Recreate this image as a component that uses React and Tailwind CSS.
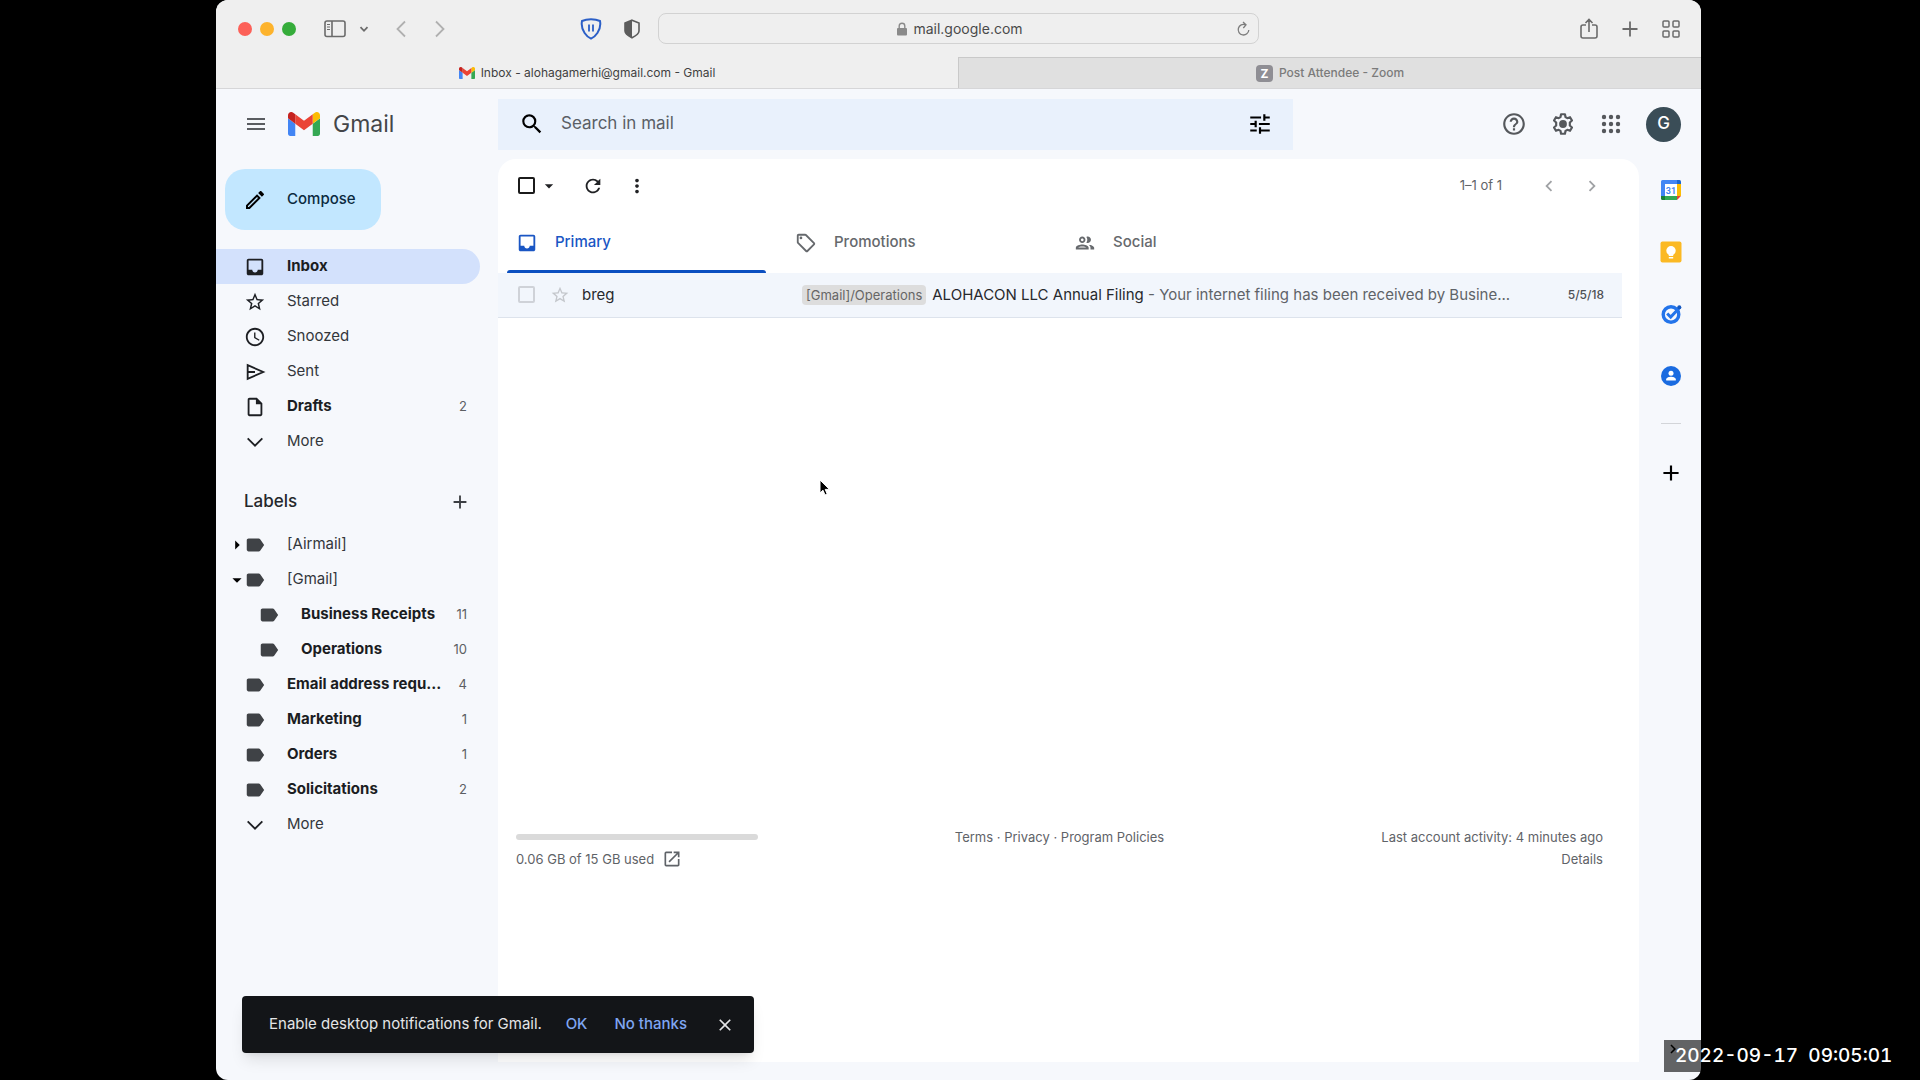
import React, { useState } from "react";
import {
  MdAdd,
  MdArrowDropDown,
  MdArrowRight,
  MdChevronLeft,
  MdChevronRight,
  MdClose,
  MdHelpOutline,
  MdInbox,
  MdLabel,
  MdMenu,
  MdMoreVert,
  MdOpenInNew,
  MdOutlineAccessTime,
  MdOutlineEdit,
  MdOutlineInsertDriveFile,
  MdOutlinePeople,
  MdOutlineSell,
  MdRefresh,
  MdSearch,
  MdStarOutline,
  MdTune,
} from "react-icons/md";

const SendIcon = ({ className }) => (
  <svg viewBox="0 0 24 24" className={className} fill="none" stroke="currentColor" strokeWidth="2" aria-hidden="true">
    <path d="M4 4.500L21 12 4 19.500zM4 12h8" />
  </svg>
);

const MoreIcon = ({ className }) => (
  <svg viewBox="0 0 24 24" className={className} fill="none" stroke="currentColor" strokeWidth="2" aria-hidden="true">
    <path d="M4 8l8 8 8-8" />
  </svg>
);

const folders = [
  { name: "Inbox", icon: MdInbox, active: true, bold: true },
  { name: "Starred", icon: MdStarOutline },
  { name: "Snoozed", icon: MdOutlineAccessTime },
  { name: "Sent", icon: SendIcon },
  { name: "Drafts", icon: MdOutlineInsertDriveFile, count: 2, bold: true },
  { name: "More", icon: MoreIcon },
];

const labels = [
  { name: "[Airmail]", icon: MdLabel, caret: "right" },
  { name: "[Gmail]", icon: MdLabel, caret: "down" },
  { name: "Business Receipts", icon: MdLabel, count: 11, bold: true, nested: true },
  { name: "Operations", icon: MdLabel, count: 10, bold: true, nested: true },
  { name: "Email address requ...", icon: MdLabel, count: 4, bold: true },
  { name: "Marketing", icon: MdLabel, count: 1, bold: true },
  { name: "Orders", icon: MdLabel, count: 1, bold: true },
  { name: "Solicitations", icon: MdLabel, count: 2, bold: true },
  { name: "More", icon: MoreIcon },
];

const tabs = [
  { name: "Primary", icon: MdInbox },
  { name: "Promotions", icon: MdOutlineSell },
  { name: "Social", icon: MdOutlinePeople },
];

const GmailLogo = ({ className }) => (
  <svg viewBox="52 42 88 66" className={className} aria-hidden="true">
    <path fill="#4285f4" d="M58 108h14V74L52 59v43c0 3.32 2.69 6 6 6" />
    <path fill="#34a853" d="M120 108h14c3.32 0 6-2.69 6-6V59l-20 15" />
    <path fill="#fbbc04" d="M120 48v26l20-15v-8c0-7.42-8.47-11.65-14.4-7.2" />
    <path fill="#ea4335" d="M72 74V48l24 18 24-18v26L96 92" />
    <path fill="#c5221f" d="M52 51v8l20 15V48l-5.6-4.2c-5.94-4.45-14.4-.22-14.4 7.2" />
  </svg>
);

const GearIcon = () => (
  <svg viewBox="0 0 24 24" className="w-[26px] h-[26px]" aria-hidden="true">
    <path
      fill="none"
      stroke="currentColor"
      strokeWidth="2"
      strokeLinejoin="round"
      d="M10.2 3h3.6l.5 2.6 1.7 1 2.5-.9 1.8 3.1-2 1.8v2.8l2 1.8-1.8 3.1-2.5-.9-1.7 1-.5 2.6h-3.6l-.5-2.6-1.7-1-2.5.9-1.8-3.1 2-1.8v-2.8l-2-1.8 1.8-3.1 2.5.9 1.7-1z"
    />
    <circle cx="12" cy="12" r="3.6" fill="currentColor" />
  </svg>
);

const AppsIcon = () => (
  <svg viewBox="0 0 24 24" className="w-6 h-6" fill="currentColor" aria-hidden="true">
    {[5, 12, 19].map((y) => [5, 12, 19].map((x) => <circle key={`${x}-${y}`} cx={x} cy={y} r="2.2" />))}
  </svg>
);

const CalendarIcon = () => (
  <svg viewBox="0 0 20 20" className="w-5 h-5" aria-hidden="true">
    <path fill="#4285f4" d="M1.5 0H16v4H4v12H0V1.5A1.5 1.5 0 0 1 1.500 0z" />
    <path fill="#1967d2" d="M16 0h2.500A1.500 1.500 0 0 1 20 1.500V4h-4z" />
    <path fill="#fbbc04" d="M16 4h4v12h-4z" />
    <path fill="#34a853" d="M4 16h12v4H4z" />
    <path fill="#188038" d="M0 16h4v4H1.500A1.500 1.500 0 0 1 0 18.500z" />
    <path fill="#ea4335" d="M16 16h4l-4 4z" />
    <path fill="#fff" d="M4 4h12v12H4z" />
    <text x="10" y="13.500" textAnchor="middle" fontSize="9" fontWeight="600" fontFamily="Roboto, sans-serif" fill="#4285f4">
      31
    </text>
  </svg>
);

const KeepIcon = () => (
  <svg viewBox="0 0 22 22" className="w-[22px] h-[22px]" aria-hidden="true">
    <rect x="0.500" y="0.500" width="21" height="21" rx="2" fill="#fbb924" />
    <circle cx="11" cy="9.800" r="4.700" fill="#fff" />
    <path fill="#fff" d="M8.800 12h4.400v3H8.800zM8.800 16h4.400v1.500H8.800z" />
  </svg>
);

const TasksIcon = () => (
  <svg viewBox="0 0 22 22" className="w-[22px] h-[22px]" aria-hidden="true">
    <circle cx="11" cy="11.500" r="7.800" fill="none" stroke="#2374ea" strokeWidth="3.400" />
    <path fill="none" stroke="#2374ea" strokeWidth="3" d="M7.200 10.500l3.500 3.500 9.500-10" />
    <circle cx="19.300" cy="4.300" r="2" fill="#1558c0" />
  </svg>
);

const ContactsIcon = () => (
  <svg viewBox="0 0 20 20" className="w-5 h-5" aria-hidden="true">
    <circle cx="10" cy="10" r="10" fill="#1a6be0" />
    <circle cx="10" cy="7.300" r="2.500" fill="#fff" />
    <path fill="#fff" d="M5.200 14.500v-1.200c0-1.700 2.800-2.600 4.800-2.600s4.800.9 4.800 2.600v1.200z" />
  </svg>
);

const BrowserBar = () => (
  <div className="bg-[#efefef]">
    <div className="h-[57px] flex items-center text-[#6b6b6b]">
      <div className="flex-1 flex items-center">
        <div className="flex items-center gap-2 ml-[22px]">
          <span className="w-[14px] h-[14px] rounded-full bg-[#fc6058]" />
          <span className="w-[14px] h-[14px] rounded-full bg-[#fdb32c]" />
          <span className="w-[14px] h-[14px] rounded-full bg-[#35ac3a]" />
        </div>
        <button aria-label="Sidebar" className="ml-7">
          <svg viewBox="0 0 22 18" className="w-[22px] h-[18px]" fill="none" stroke="currentColor" strokeWidth="1.600">
            <rect x="1" y="1" width="20" height="15.500" rx="2" />
            <path d="M8 1v15.500" />
            <path strokeWidth="1" d="M3 4.500h3M3 7h3M3 9.500h3" />
          </svg>
        </button>
        <button aria-label="Tab groups" className="ml-[13px]">
          <svg viewBox="0 0 10 10" className="w-[10px] h-[10px]" fill="none" stroke="currentColor" strokeWidth="1.800">
            <path d="M1.500 3.200L5 6.800l3.500-3.600" />
          </svg>
        </button>
        <button aria-label="Back" className="ml-[27px] text-[#b0b0b0]">
          <svg viewBox="0 0 10 18" className="w-[10px] h-[18px]" fill="none" stroke="currentColor" strokeWidth="1.800">
            <path d="M9 1.500L1.500 9 9 16.500" />
          </svg>
        </button>
        <button aria-label="Forward" className="ml-[29px] text-[#b0b0b0]">
          <svg viewBox="0 0 10 18" className="w-[10px] h-[18px]" fill="none" stroke="currentColor" strokeWidth="1.800">
            <path d="M1 1.500L8.500 9 1 16.500" />
          </svg>
        </button>
        <div className="ml-auto mr-[18px] flex items-center gap-[22px]">
          <button aria-label="Password manager">
            <svg viewBox="0 0 22 22" className="w-[22px] h-[22px]" fill="none" stroke="#2b5fc7">
              <path strokeWidth="2" d="M11 1.300c-3.200 0-6.600.6-9 1.700-.8 4 .2 8.500 2.600 12 1.700 2.500 4 4.700 6.400 5.700 2.400-1 4.700-3.200 6.400-5.700 2.400-3.500 3.400-8 2.600-12-2.400-1.100-5.800-1.700-9-1.700z" />
              <path strokeWidth="1.800" d="M9 6.500v7M13 6.500v7" />
            </svg>
          </button>
          <button aria-label="Privacy report">
            <svg viewBox="0 0 16 20" className="w-4 h-5">
              <path fill="none" stroke="#5c5c5c" strokeWidth="1.600" d="M8 1.200L15 4v8c0 3-3.500 5-7 6.800C4.500 17 1 15 1 12V4z" />
              <path fill="#5c5c5c" d="M8 1.200v17.600C4.500 17 1 15 1 12V4z" />
            </svg>
          </button>
        </div>
      </div>
      <div className="w-[601px] h-[31px] border border-[#d2d2d2] rounded-lg flex items-center px-2">
        <div className="flex-1 flex items-center justify-center gap-[6px] pl-4">
          <svg viewBox="0 0 10 14" className="w-[10px] h-[14px]">
            <rect y="6" width="10" height="7.500" rx="1" fill="#8a8a8a" />
            <path d="M2.200 6.500V4a2.800 2.800 0 0 1 5.600 0v2.500" fill="none" stroke="#8a8a8a" strokeWidth="1.400" />
          </svg>
          <span className="text-sm text-[#4a4a4a]">mail.google.com</span>
        </div>
        <button aria-label="Reload">
          <svg viewBox="0 0 13 16" className="w-[13px] h-4" fill="none" stroke="#7c7c7c" strokeWidth="1.300">
            <path d="M8.500 3.800A5.300 5.300 0 1 0 11.800 9M6 1l3 2.800L6.300 7" />
          </svg>
        </button>
      </div>
      <div className="flex-1 flex items-center justify-end">
        <div className="flex items-center gap-[23px] mr-[21px]">
          <button aria-label="Share">
            <svg viewBox="0 0 18 22" className="w-[18px] h-[22px]" fill="none" stroke="currentColor" strokeWidth="1.600">
              <path d="M6 7H3a2 2 0 0 0-2 2v9a2 2 0 0 0 2 2h12a2 2 0 0 0 2-2V9a2 2 0 0 0-2-2h-3M9 14V1.500M5.500 5L9 1.500 12.500 5" />
            </svg>
          </button>
          <button aria-label="New tab">
            <svg viewBox="0 0 18 18" className="w-[18px] h-[18px]" fill="none" stroke="currentColor" strokeWidth="1.800">
              <path d="M9 1.500v15M1.500 9h15" />
            </svg>
          </button>
          <button aria-label="Tab overview">
            <svg viewBox="0 0 18 18" className="w-[18px] h-[18px]" fill="none" stroke="currentColor" strokeWidth="1.500">
              <rect x="1" y="1" width="6" height="6" rx="1" />
              <rect x="11" y="1" width="6" height="6" rx="1" />
              <rect x="1" y="11" width="6" height="6" rx="1" />
              <rect x="11" y="11" width="6" height="6" rx="1" />
            </svg>
          </button>
        </div>
      </div>
    </div>
    <div className="h-8 flex text-xs border-b border-[#d6d6d8]">
      <button className="flex-1 flex items-center justify-center gap-[6px] text-[#3f3f3f]">
        <GmailLogo className="w-4 h-3" />
        Inbox - alohagamerhi@gmail.com - Gmail
      </button>
      <button className="flex-1 flex items-center justify-center gap-[6px] font-medium text-[#7b7b7b] bg-[#e0e0e0] border-l border-t border-[#c9c9c9]">
        <span className="w-[17px] h-[17px] rounded-sm bg-[#8f8e94] text-white font-bold leading-[17px]">Z</span>
        Post Attendee - Zoom
      </button>
    </div>
  </div>
);

const NavItem = ({ item }) => {
  const Icon = item.icon;
  return (
    <li>
      <a
        href="#"
        className={`h-[35px] flex items-center pr-[13px] rounded-r-full text-[15px] ${
          item.active ? "bg-[#d3e1fc]" : ""
        } ${item.nested ? "pl-[42px]" : item.caret ? "pl-[10px]" : "pl-7"} ${
          item.bold ? "font-bold text-[#1b1d22]" : "text-[#33363b]"
        }`}
      >
        {item.caret === "right" && <MdArrowRight className="w-[22px] h-[22px] -mr-1 shrink-0 text-black" />}
        {item.caret === "down" && <MdArrowDropDown className="w-[22px] h-[22px] -mr-1 shrink-0 text-black" />}
        <Icon className={`w-[22px] h-[22px] shrink-0 ${Icon === MdLabel ? "text-[#3f4246]" : "text-[#1d1f23]"}`} />
        <span className="ml-[21px] flex-1 whitespace-nowrap">{item.name}</span>
        {item.count && <span className="text-[13px] font-normal text-[#5c5f63]">{item.count}</span>}
      </a>
    </li>
  );
};

const Sidebar = () => (
  <aside className="w-[282px] shrink-0 pt-[10px] pr-[18px]">
    <button className="ml-[9px] h-[61px] w-[156px] pl-[18px] flex items-center gap-5 rounded-[20px] bg-[#c2e7ff] text-[15px] font-medium text-[#0b2a40]">
      <MdOutlineEdit className="w-6 h-6 text-black" />
      Compose
    </button>
    <nav>
      <ul className="mt-[19px]">
        {folders.map((item) => (
          <NavItem key={item.name} item={item} />
        ))}
      </ul>
      <div className="mt-[25px] h-9 pl-7 pr-[9px] flex items-center justify-between">
        <h2 className="text-[17px] font-medium text-[#25272b]">Labels</h2>
        <button aria-label="Create new label">
          <MdAdd className="w-[22px] h-[22px] text-[#3c3f43]" />
        </button>
      </div>
      <ul className="mt-[7px]">
        {labels.map((item) => (
          <NavItem key={item.name} item={item} />
        ))}
      </ul>
    </nav>
  </aside>
);

const Header = () => (
  <header className="h-[70px] flex items-center">
    <div className="w-[282px] shrink-0 flex items-center pl-7">
      <button aria-label="Main menu">
        <MdMenu className="w-6 h-6 text-[#5a5d61]" />
      </button>
      <GmailLogo className="ml-5 w-8 h-6" />
      <span className="ml-[13px] text-[23px] text-[#444649]">Gmail</span>
    </div>
    <div className="w-[795px] h-[51px] flex items-center pl-[21px] pr-5 bg-[#e9f1fc]">
      <button aria-label="Search">
        <MdSearch className="w-[26px] h-[26px] text-black" />
      </button>
      <input
        type="text"
        aria-label="Search in mail"
        placeholder="Search in mail"
        className="ml-4 flex-1 bg-transparent text-[17px] text-[#43474d] placeholder:text-[#5a5f66] focus:outline-none"
      />
      <button aria-label="Search options">
        <MdTune className="w-[26px] h-[26px] text-black" />
      </button>
    </div>
    <div className="flex-1 flex items-center justify-end gap-[23px] pr-5 text-[#55585c]">
      <button aria-label="Support">
        <MdHelpOutline className="w-[26px] h-[26px]" />
      </button>
      <button aria-label="Settings">
        <GearIcon />
      </button>
      <button aria-label="Google apps">
        <AppsIcon />
      </button>
      <button className="w-[35px] h-[35px] rounded-full bg-[#3a4d57] text-white text-[17px] font-medium">G</button>
    </div>
  </header>
);

const MailPanel = () => {
  const [activeTab, setActiveTab] = useState("Primary");

  return (
    <main className="flex-1 min-w-0 mb-[18px] bg-white rounded-t-[18px] flex flex-col">
      {/* Toolbar */}
      <div className="h-[53px] flex items-center pl-5 pr-9 text-[#202124]">
        <input
          type="checkbox"
          aria-label="Select all"
          className="appearance-none w-[17px] h-[17px] border-2 border-[#1b1b1b] rounded-xs"
        />
        <button aria-label="Select menu" className="ml-1">
          <MdArrowDropDown className="w-5 h-5" />
        </button>
        <button aria-label="Refresh" className="ml-[23px]">
          <MdRefresh className="w-[22px] h-[22px]" />
        </button>
        <button aria-label="More options" className="ml-[22px]">
          <MdMoreVert className="w-[22px] h-[22px]" />
        </button>
        <span className="ml-auto text-[13px] text-[#5f6368]">1–1 of 1</span>
        <button aria-label="Newer" className="ml-9 text-[#a0a2a5]">
          <MdChevronLeft className="w-[22px] h-[22px]" />
        </button>
        <button aria-label="Older" className="ml-[21px] text-[#a0a2a5]">
          <MdChevronRight className="w-[22px] h-[22px]" />
        </button>
      </div>

      {/* Category tabs */}
      <div role="tablist" className="flex gap-5 pl-[9px]">
        {tabs.map(({ name, icon: Icon }) => (
          <button
            key={name}
            role="tab"
            aria-selected={activeTab === name}
            onClick={() => setActiveTab(name)}
            className={`relative w-[259px] h-[61px] pl-[9px] flex items-center gap-[17px] text-[15px] font-medium ${
              activeTab === name ? "text-[#1a56c4]" : "text-[#66696d]"
            }`}
          >
            <Icon className="w-[22px] h-[22px]" />
            {name}
            {activeTab === name && <span className="absolute inset-x-0 bottom-0 h-[3px] rounded-t bg-[#0b4fc0]" />}
          </button>
        ))}
      </div>

      {/* Messages */}
      <div className="pr-[17px]">
        <table className="w-full table-fixed">
          <tbody>
            <tr className="h-11 bg-[#f2f6fc] border-b border-[#dde3ec] text-[15px]">
              <td className="w-[84px] pl-5">
                <div className="flex items-center gap-[15px]">
                  <input
                    type="checkbox"
                    aria-label="Select message from breg"
                    className="appearance-none w-[17px] h-[17px] border-2 border-[#cfd2d8] rounded-xs"
                  />
                  <button aria-label="Star">
                    <MdStarOutline className="w-5 h-5 text-[#c4c7cc]" />
                  </button>
                </div>
              </td>
              <td className="w-[220px] text-[#27292d]">breg</td>
              <td>
                <div className="flex items-center gap-[6px] whitespace-nowrap">
                  <span className="shrink-0 h-5 px-1 rounded bg-[#dddddd] text-[13px] leading-5 text-[#666666]">
                    [Gmail]/Operations
                  </span>
                  <span className="text-[#5f6368]">
                    <span className="text-[#27292d]">ALOHACON LLC Annual Filing</span> - Your internet filing has been
                    received by Busine...
                  </span>
                </div>
              </td>
              <td className="w-[100px] pr-[18px] text-right text-xs font-medium text-[#4d5054]">5/5/18</td>
            </tr>
          </tbody>
        </table>
      </div>

      {/* Footer */}
      <footer className="mt-[508px] pl-[18px] pr-9 grid grid-cols-3 text-[13px] leading-[22px] text-[#5f6368]">
        <div>
          <div className="mt-2 mb-1 w-[242px] h-[6px] rounded-full bg-[#dadada]" />
          <a href="#" className="flex items-center gap-2 pt-1">
            0.06 GB of 15 GB used
            <MdOpenInNew className="w-5 h-5" />
          </a>
        </div>
        <div className="text-center">
          <a href="#">Terms</a> · <a href="#">Privacy</a> · <a href="#">Program Policies</a>
        </div>
        <div className="text-right">
          Last account activity: 4 minutes ago
          <br />
          <a href="#">Details</a>
        </div>
      </footer>
    </main>
  );
};

const SidePanel = () => (
  <aside className="w-[62px] shrink-0 flex flex-col items-center pl-[2px] pt-5">
    <div className="flex flex-col items-center gap-10">
      <button aria-label="Calendar" className="h-[22px]">
        <CalendarIcon />
      </button>
      <button aria-label="Keep" className="h-[22px]">
        <KeepIcon />
      </button>
      <button aria-label="Tasks" className="h-[22px]">
        <TasksIcon />
      </button>
      <button aria-label="Contacts" className="h-[22px]">
        <ContactsIcon />
      </button>
    </div>
    <hr className="mt-9 w-5 border-[#d3d5d9]" />
    <button aria-label="Get add-ons" className="mt-9">
      <MdAdd className="w-[26px] h-[26px] text-black" />
    </button>
  </aside>
);

const App = () => {
  const [showToast, setShowToast] = useState(true);

  return (
    <div className="relative min-h-screen bg-black pl-[216px] pr-[219px] flex font-['Inter',sans-serif]">
      <div className="flex-1 min-w-0 flex flex-col overflow-hidden rounded-xl bg-[#f6f8fc]">
        <BrowserBar />
        <Header />
        <div className="flex-1 flex">
          <Sidebar />
          <MailPanel />
          <SidePanel />
        </div>
      </div>

      {showToast && (
        <div className="absolute left-[242px] bottom-[27px] w-[512px] h-[57px] pl-[27px] pr-[19px] flex items-center rounded bg-[#131518] shadow-lg text-[15px] text-[#e4e5e7]">
          <span>Enable desktop notifications for Gmail.</span>
          <button className="ml-auto font-medium text-[#7fa6f2]">OK</button>
          <button className="ml-[27px] font-medium text-[#7fa6f2]">No thanks</button>
          <button aria-label="Close" className="ml-7" onClick={() => setShowToast(false)}>
            <MdClose className="w-5 h-5" />
          </button>
        </div>
      )}

      {/* Mouse pointer */}
      <svg viewBox="0 0 12 18" className="absolute left-[819px] top-[479px] w-3 h-[18px]" aria-hidden="true">
        <path d="M1 1v13l3-2.800 2 4.800 2.200-1-2-4.600h4.300z" fill="#000" stroke="#fff" strokeWidth="1" />
      </svg>

      {/* Recording clock */}
      <div className="absolute right-0 bottom-2 w-64 h-8 flex bg-black/60 text-white">
        <MdChevronRight className="w-[18px] h-[18px] -mr-[7px] text-black" />
        <time className="whitespace-pre text-[19px] leading-8 font-medium tabular-nums">2022-09-17  09:05:01</time>
      </div>
    </div>
  );
};

export default App;
